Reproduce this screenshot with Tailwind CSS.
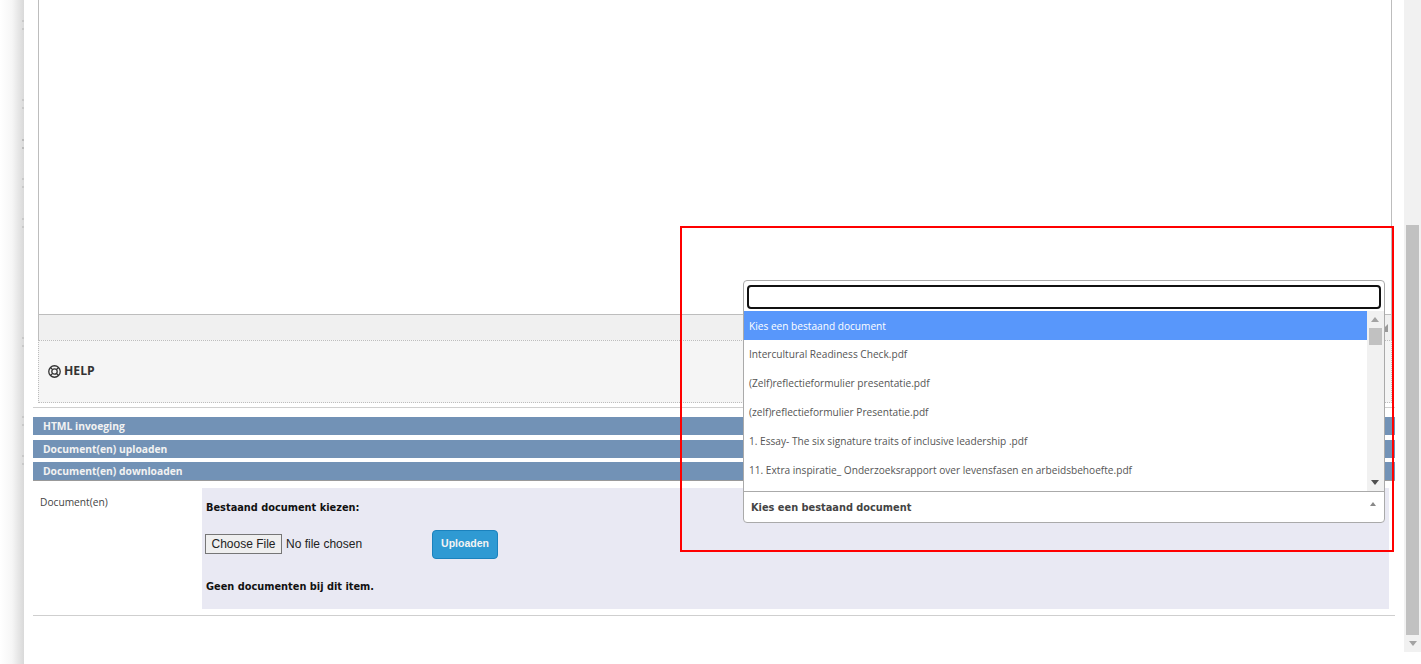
<!DOCTYPE html>
<html>
<head>
<meta charset="utf-8">
<script src="https://cdn.jsdelivr.net/npm/@tailwindcss/browser@4"></script>
</head>
<body class="bg-white">
<div class="relative flex h-[664px] w-[1421px] overflow-hidden bg-white font-['Open_Sans',sans-serif]">
  <!-- left shadow gutter -->
  <div class="relative w-[24px] shrink-0 bg-gradient-to-r from-white via-[#f6f6f6] to-[#d9d9d9]">
    <i class="absolute right-0 top-[20px] h-[2px] w-[2px] bg-[#c8c8c8]"></i><i class="absolute right-0 top-[28px] h-[2px] w-[2px] bg-[#c8c8c8]"></i>
    <i class="absolute right-0 top-[99px] h-[2px] w-[2px] bg-[#c8c8c8]"></i><i class="absolute right-0 top-[107px] h-[2px] w-[2px] bg-[#c8c8c8]"></i>
    <i class="absolute right-0 top-[139px] h-[2px] w-[2px] bg-[#bbb]"></i><i class="absolute right-0 top-[147px] h-[2px] w-[2px] bg-[#bbb]"></i>
    <i class="absolute right-0 top-[178px] h-[2px] w-[2px] bg-[#c8c8c8]"></i><i class="absolute right-0 top-[186px] h-[2px] w-[2px] bg-[#c8c8c8]"></i>
    <i class="absolute right-0 top-[218px] h-[2px] w-[2px] bg-[#c8c8c8]"></i><i class="absolute right-0 top-[226px] h-[2px] w-[2px] bg-[#c8c8c8]"></i>
    <i class="absolute right-0 top-[337px] h-[2px] w-[2px] bg-[#c8c8c8]"></i><i class="absolute right-0 top-[345px] h-[2px] w-[2px] bg-[#c8c8c8]"></i>
    <i class="absolute right-0 top-[416px] h-[2px] w-[2px] bg-[#c8c8c8]"></i><i class="absolute right-0 top-[424px] h-[2px] w-[2px] bg-[#c8c8c8]"></i>
    <i class="absolute right-0 top-[455px] h-[2px] w-[2px] bg-[#c8c8c8]"></i><i class="absolute right-0 top-[463px] h-[2px] w-[2px] bg-[#c8c8c8]"></i>
  </div>

  <!-- main content -->
  <div class="flex w-[1380px] shrink-0 flex-col pl-[9px]">
    <div class="ml-[5px] w-[1354px]">
      <div class="h-[315px] border-x border-b border-[#bdbdbd] bg-white"></div>
      <div class="flex h-[25px] items-center justify-end border-x border-[#bdbdbd] bg-[#f0f0f0] pr-[3px]">
        <svg class="h-[8px] w-[3px]" viewBox="0 0 3 8"><path d="M3 0v8H0V3z" fill="#999"/></svg>
      </div>
      <div class="flex h-[63px] items-center gap-[3px] border border-dotted border-[#bdbdbd] bg-[#f5f5f5] pl-[9px]">
        <svg class="h-[13px] w-[13px]" viewBox="0 0 24 24" fill="none" stroke="#333" stroke-width="2.4">
          <circle cx="12" cy="12" r="10.6"/><circle cx="12" cy="12" r="5"/><path d="M4.5 4.5 8.5 8.5M19.5 4.5 15.5 8.5M4.5 19.5 8.5 15.5M19.5 19.5 15.5 15.5"/>
        </svg>
        <span class="text-[12.2px] font-bold leading-none text-[#333]">HELP</span>
      </div>
    </div>
    <div class="mt-[4px] h-px w-[1362px] bg-[#cfcfcf]"></div>

    <div class="mt-[9px] flex h-[18px] w-[1362px] items-center bg-[#7292b6] pl-[10px] pt-[2px] text-[10.3px] font-bold text-[#f2f2f2]">HTML invoeging</div>
    <div class="mt-[5px] flex h-[18px] w-[1362px] items-center bg-[#7292b6] pl-[10px] pt-[2px] text-[10.3px] font-bold text-[#f2f2f2]">Document(en) uploaden</div>
    <div class="mt-[4px] flex h-[19px] w-[1362px] items-center border-b border-[#999] bg-[#7292b6] pl-[10px] pt-[2px] text-[10.3px] font-bold text-[#f2f2f2]">Document(en) downloaden</div>

    <div class="mt-[7px] flex h-[121px] w-[1356px]">
      <div class="w-[169px] pl-[7px] pt-[7px] text-[10.2px] leading-[14px] text-[#444]">Document(en)</div>
      <div class="w-[1187px] bg-[#e9e9f3] pl-[4px] font-['DejaVu_Sans',sans-serif] text-[9.8px] font-bold text-[#111]">
        <div class="pt-[13px] leading-[14px]">Bestaand document kiezen:</div>
        <div class="mt-[15px] flex h-[29px] items-center">
          <input type="file" class="-ml-px mb-[2px] w-[227px] font-['Liberation_Sans',sans-serif] text-[12px] font-normal text-[#222] [&::file-selector-button]:mr-[4px] [&::file-selector-button]:border [&::file-selector-button]:border-[#767676] [&::file-selector-button]:bg-[#efefef] [&::file-selector-button]:px-[5.5px] [&::file-selector-button]:py-0" />
          <button class="h-[29px] w-[66px] rounded-[4px] border border-[#1b82bd] bg-[#2f9ad3] pb-[2px] font-['Liberation_Sans',sans-serif] text-[10.5px] font-bold text-[#f4f4f4]">Uploaden</button>
        </div>
        <div class="mt-[21px] leading-[14px]">Geen documenten bij dit item.</div>
      </div>
    </div>
    <div class="mt-[6px] h-px w-[1362px] bg-[#cfcfcf]"></div>
  </div>

  <!-- page scrollbar -->
  <div class="relative h-[652px] w-[17px] shrink-0 bg-[#f1f1f1]">
    <div class="absolute left-[2px] top-[225px] h-[410px] w-[13px] bg-[#c1c1c1]"></div>
    <svg class="absolute bottom-[6px] left-[5px] h-[5px] w-[8px]" viewBox="0 0 8 5"><path d="M0 0h8L4 5z" fill="#a3a3a3"/></svg>
  </div>

  <!-- red annotation -->
  <div class="pointer-events-none absolute left-[680px] top-[226px] h-[326px] w-[714px] border-2 border-[#f00]"></div>

  <!-- dropdown -->
  <div class="absolute left-[743px] top-[280px] flex h-[243px] w-[642px] flex-col rounded-[4px] border border-[#aaa] bg-white">
    <div class="h-[30px] shrink-0 pl-[3px] pr-[3px] pt-[4px]">
      <div class="h-[24px] rounded-[4px] border-2 border-[#111] bg-white"></div>
    </div>
    <div class="relative flex h-[181px] shrink-0 border-b border-[#aaa]">
      <ul class="w-[623px] overflow-hidden text-[10.15px] leading-[29px] text-[#555]">
        <li class="h-[29px] bg-[#5897fb] pl-[5px] leading-[31px] text-white">Kies een bestaand document</li>
        <li class="h-[29px] pl-[5px]">Intercultural Readiness Check.pdf</li>
        <li class="h-[29px] pl-[5px]">(Zelf)reflectieformulier presentatie.pdf</li>
        <li class="h-[29px] pl-[5px]">(zelf)reflectieformulier Presentatie.pdf</li>
        <li class="h-[29px] pl-[5px]">1. Essay- The six signature traits of inclusive leadership .pdf</li>
        <li class="h-[29px] pl-[5px]">11. Extra inspiratie_ Onderzoeksrapport over levensfasen en arbeidsbehoefte.pdf</li>
      </ul>
      <div class="relative w-[17px] bg-[#f1f1f1]">
        <svg class="absolute left-[4px] top-[6px] h-[5px] w-[8px]" viewBox="0 0 8 5"><path d="M4 0l4 5H0z" fill="#a3a3a3"/></svg>
        <div class="absolute left-[2px] top-[17px] h-[17px] w-[13px] bg-[#c1c1c1]"></div>
        <svg class="absolute bottom-[6px] left-[4px] h-[5px] w-[8px]" viewBox="0 0 8 5"><path d="M0 0h8L4 5z" fill="#505050"/></svg>
      </div>
    </div>
    <div class="relative flex grow items-center pl-[7px] pt-[3px] font-['DejaVu_Sans',sans-serif] text-[9.8px] font-bold text-[#444]">
      Kies een bestaand document
      <svg class="absolute right-[8px] top-[10px] h-[4px] w-[6px]" viewBox="0 0 6 4"><path d="M3 0l3 4H0z" fill="#888"/></svg>
    </div>
  </div>
</div>
</body>
</html>
